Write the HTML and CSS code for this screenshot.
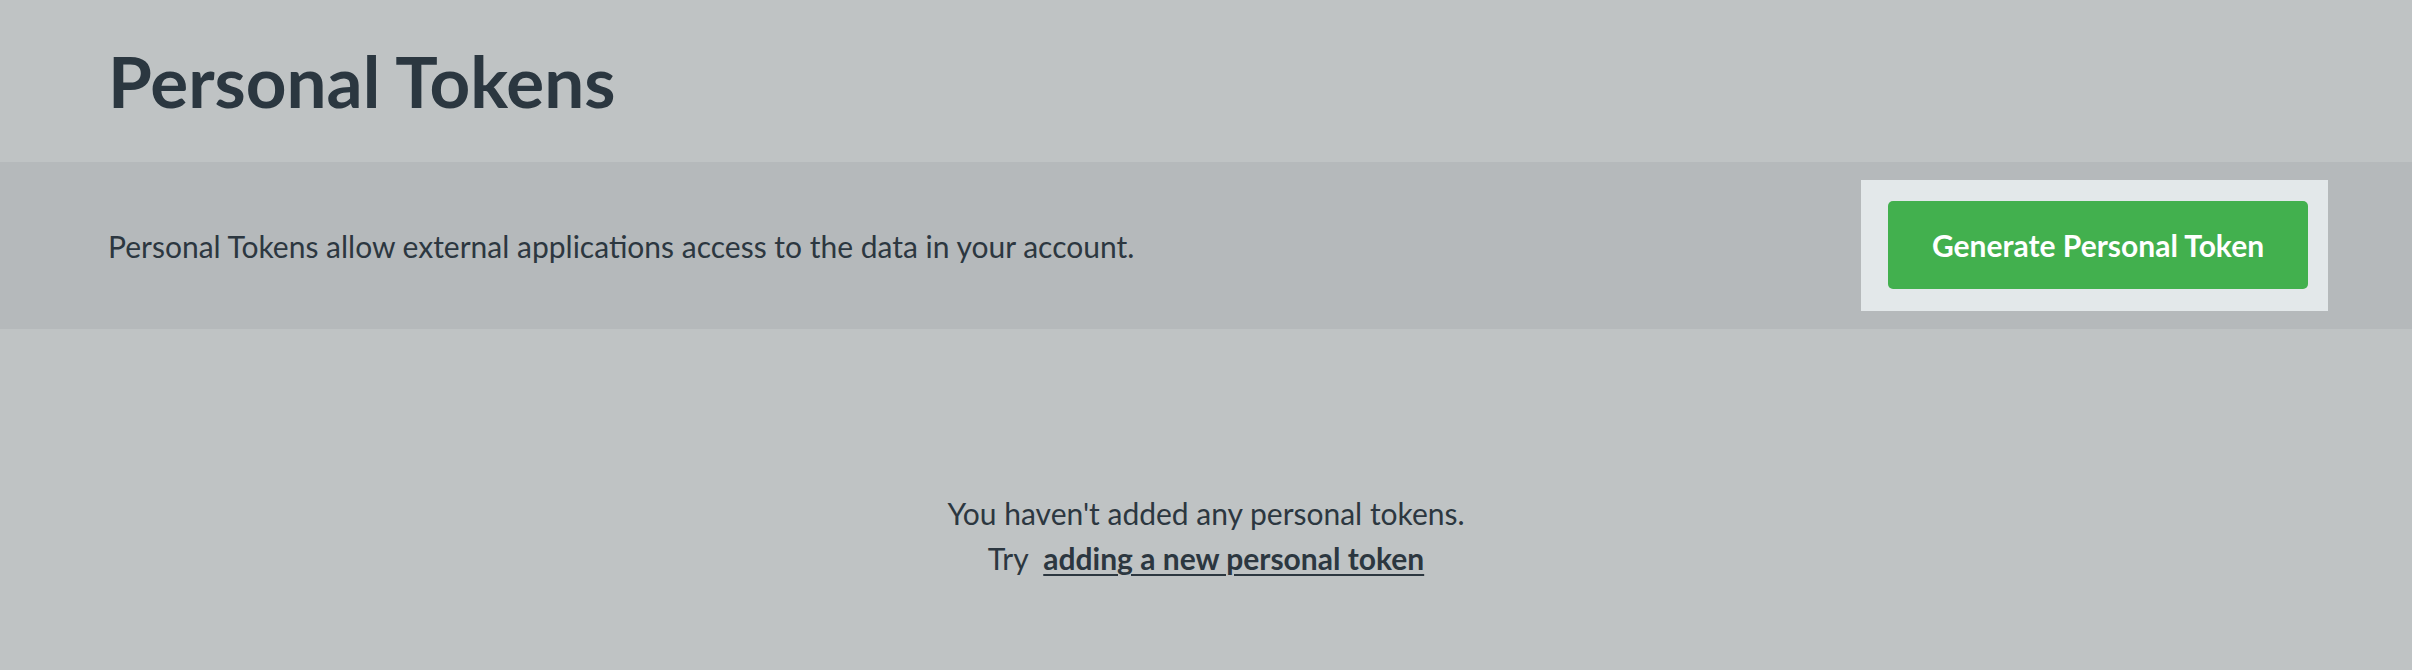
FILE: index.html
```html
<!DOCTYPE html>
<html lang="en">
<head>
<meta charset="utf-8">
<title>Personal Tokens</title>
<link rel="stylesheet" href="styles.css">
</head>
<body>
<div class="page">
  <header class="page-header">
    <h1 class="page-title">Personal Tokens</h1>
  </header>
  <section class="intro-bar">
    <p class="intro-text">Personal Tokens allow external applications access to the data in your account.</p>
    <div class="spotlight">
      <button class="btn-generate" type="button">Generate Personal Token</button>
    </div>
  </section>
  <section class="empty-state">
    <p class="empty-line">You haven't added any personal tokens.</p>
    <p class="empty-line">Try&nbsp; <a class="empty-link" href="#">adding a new personal token</a></p>
  </section>
</div>
</body>
</html>
```

FILE: styles.css
```css
html, body {
  margin: 0;
  padding: 0;
}
body {
  background: #bfc3c4;
  font-family: Lato, "Open Sans", "Liberation Sans", sans-serif;
  color: #2c3740;
  width: 2412px;
  height: 670px;
  overflow: hidden;
}
.page {
  display: flex;
  flex-direction: column;
}
.page-header {
  height: 162px;
  display: flex;
  align-items: center;
  padding-left: 108px;
}
.page-title {
  margin: 0;
  font-size: 71px;
  font-weight: 700;
  line-height: 1;
  color: #2b3740;
  position: relative;
  top: -1px;
}
.intro-bar {
  height: 167px;
  background: #b5b9bb;
  display: flex;
  align-items: center;
  justify-content: space-between;
  padding: 0 84px 0 108px;
}
.intro-text {
  margin: 0;
  font-size: 30px;
  color: #2c3740;
}
.spotlight {
  background: #e3e8ea;
  padding: 21px 20px 22px 27px;
}
.btn-generate {
  display: block;
  width: 420px;
  height: 88px;
  border: none;
  border-radius: 5px;
  background: #42b04e;
  color: #ffffff;
  font-family: Lato, "Open Sans", "Liberation Sans", sans-serif;
  font-size: 30px;
  font-weight: 700;
  padding: 0;
}
.empty-state {
  display: flex;
  flex-direction: column;
  align-items: center;
  padding-top: 162px;
}
.empty-line {
  margin: 0;
  font-size: 30px;
  line-height: 45px;
  color: #2c3740;
}
.empty-link {
  color: #2c3740;
  font-weight: 700;
  text-decoration: underline;
  text-decoration-thickness: 2px;
  text-underline-offset: 4px;
}
```
